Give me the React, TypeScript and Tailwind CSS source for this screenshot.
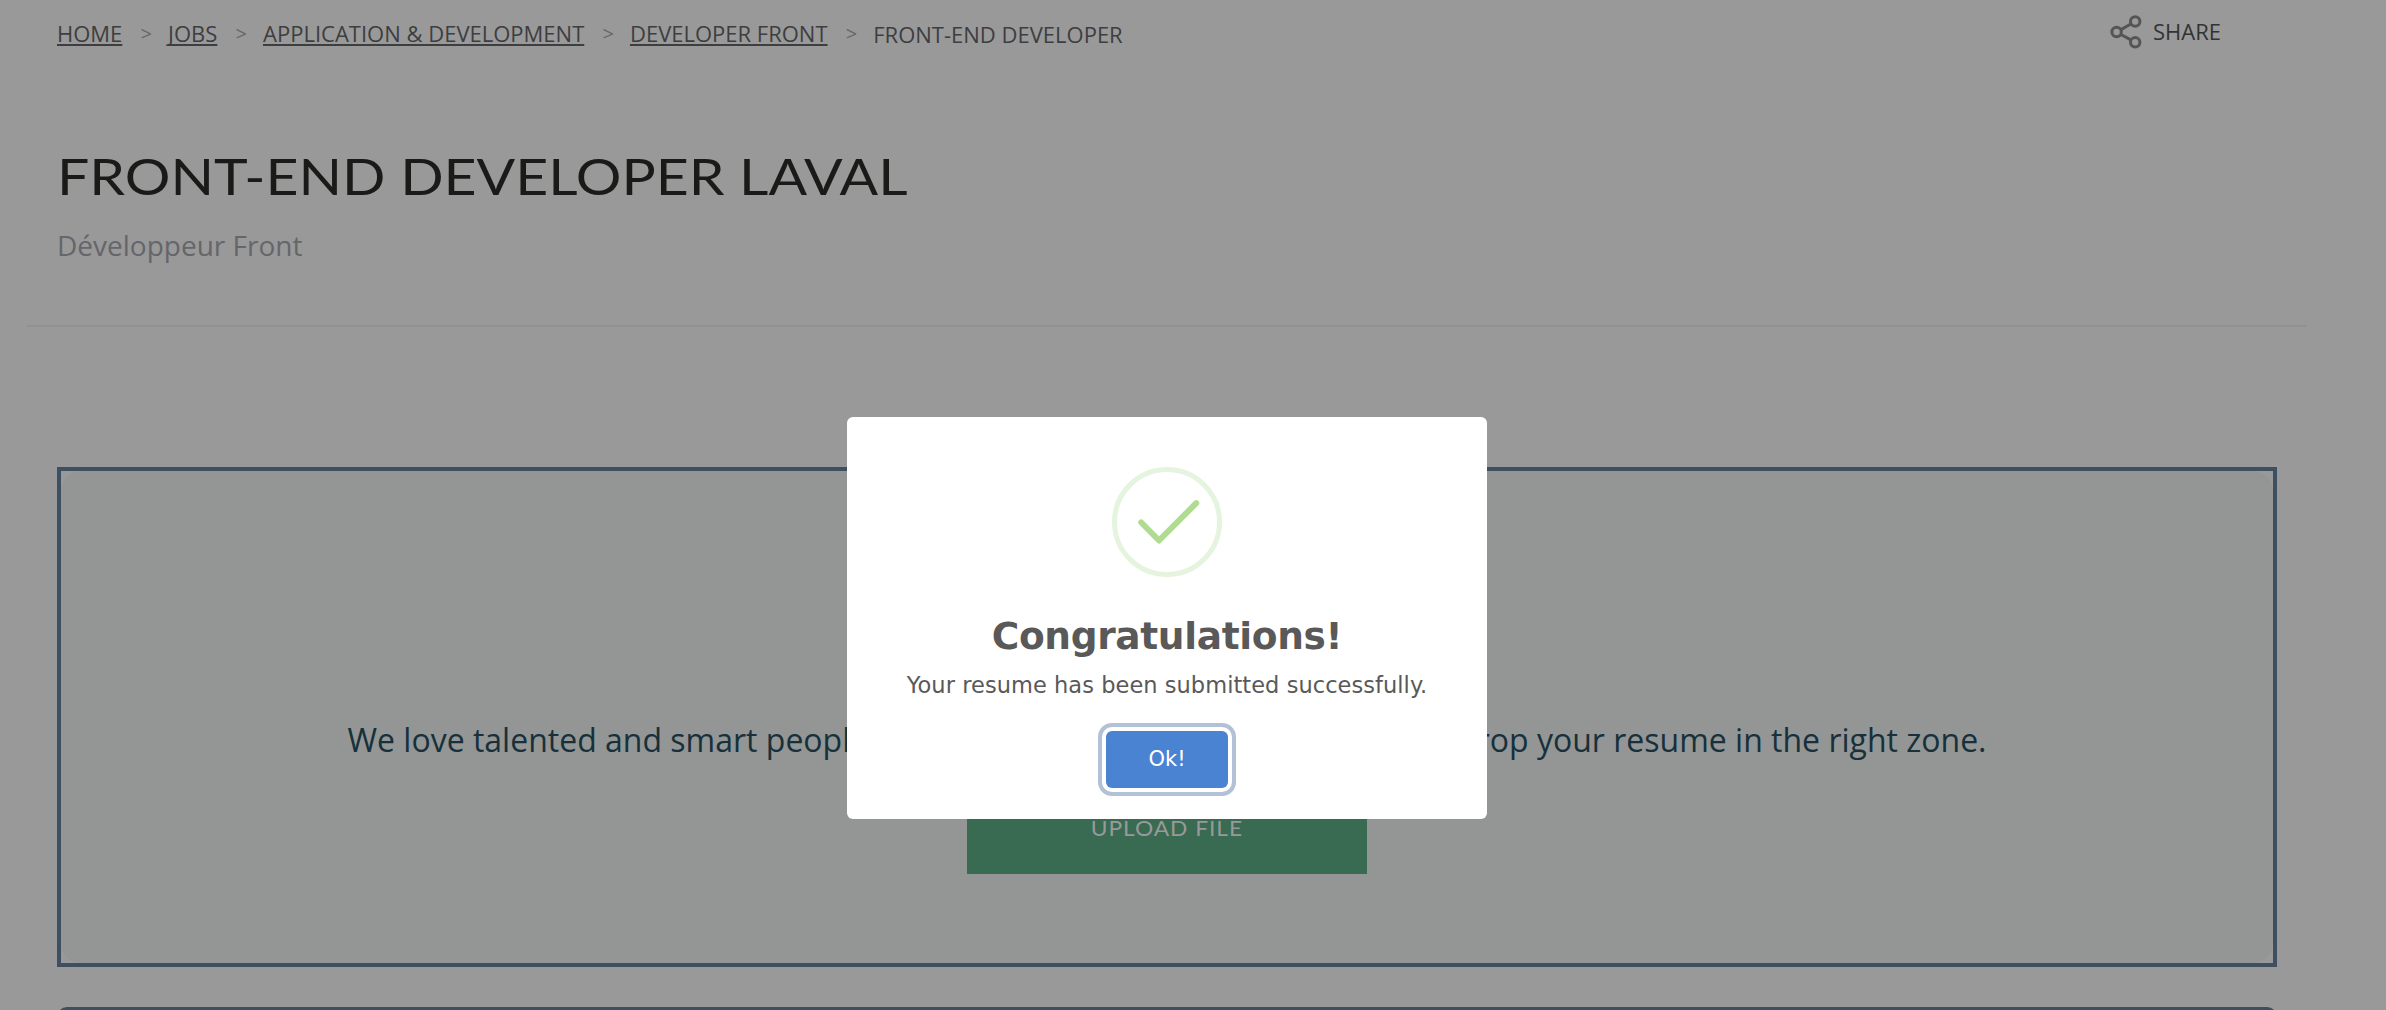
const crumbs = ['HOME', 'JOBS', 'APPLICATION & DEVELOPMENT', 'DEVELOPER FRONT'];

function ShareIcon() {
  return (
    <svg width="32" height="34" viewBox="0 0 32 34" fill="none" stroke="#555555" strokeWidth="3">
      <circle cx="25.2" cy="6.5" r="4.7" />
      <circle cx="6.6" cy="17" r="4.7" />
      <circle cx="25.2" cy="27.3" r="4.7" />
      <path d="M11 14.6 L20.8 9 M11 19.5 L20.8 24.9" />
    </svg>
  );
}

function Breadcrumbs() {
  return (
    <nav className="flex items-center text-[22px] leading-[30px] text-[#3d3e40]">
      {crumbs.map((c) => (
        <span key={c} className="flex whitespace-nowrap">
          <a className="underline decoration-2 underline-offset-[2px] [text-decoration-skip-ink:none]">{c}</a>
          <span className="w-[45.7px] pl-[2px] pt-px text-center text-[20px] text-[#65666b]">&gt;</span>
        </span>
      ))}
      <span className="whitespace-nowrap">FRONT-END DEVELOPER</span>
    </nav>
  );
}

function Modal() {
  return (
    <div className="absolute left-[847px] top-[417px] flex h-[402px] w-[640px] flex-col items-center rounded-md bg-white pt-[50px] font-['DejaVu_Sans',sans-serif] text-[#595959]">
      <svg width="110" height="110" viewBox="0 0 110 110" fill="none">
        <circle cx="55" cy="55" r="52.5" stroke="#e5f4de" strokeWidth="5" />
        <path d="M29.3 55.5 L47 73.5 L84.2 36.2" stroke="#b0dc92" strokeWidth="6" strokeLinecap="round" strokeLinejoin="round" />
      </svg>
      <h2 className="mt-[34px] whitespace-nowrap text-[37.5px] font-bold leading-[50px] tracking-[-0.35px]">Congratulations!</h2>
      <p className="mt-[8px] whitespace-nowrap text-[22.5px] leading-[32px] tracking-[0.05px]">Your resume has been submitted successfully.</p>
      <button className="mt-[30px] h-[57px] w-[122px] rounded-md bg-[#4a83d1] pt-px text-[21px] text-white outline-4 outline-offset-4 outline-[#b2c1d5]">
        Ok!
      </button>
    </div>
  );
}

export default function App() {
  return (
    <div className="relative h-[1010px] w-[2386px] overflow-hidden bg-[#999999] font-['Open_Sans',sans-serif]">
      <header className="flex h-[68px] items-start justify-between pl-[57px] pr-[165px]">
        <div className="pt-[18px]">
          <Breadcrumbs />
        </div>
        <div className="flex items-start gap-[11px] pt-[15px] text-[22px] leading-[30px] text-[#333333]">
          <ShareIcon />
          <span className="pt-px">SHARE</span>
        </div>
      </header>
      <section className="ml-[27px] mr-[79px] h-[259px] border-b-2 border-[#919191] pl-[30px] pt-[76px]">
        <h1 className="w-fit origin-left scale-x-[1.12] whitespace-nowrap font-['Lato',sans-serif] text-[51px] leading-[64px] text-[#1a1a19]">FRONT-END DEVELOPER LAVAL</h1>
        <p className="mt-[18px] text-[28px] leading-[38px] text-[#65666b]">Développeur Front</p>
      </section>
      <section className="ml-[57px] mt-[140px] h-[500px] w-[2220px] border-4 border-[#3d4f60]">
        <div className="flex h-full flex-col items-center rounded-[20px] bg-[#939694] pt-[247px]">
          <div className="flex w-[1639px] justify-between whitespace-nowrap text-[32px] leading-[44px] text-[#17303b]">
            <span>We love talented and smart people</span>
            <span>drop your resume in the right zone.</span>
          </div>
          <button className="mt-[20px] h-[92px] w-[400px] bg-[#386b51] font-['Lato',sans-serif] text-[21.5px] text-[#999999]">
            <span className="inline-block scale-x-[1.06] tracking-[0.9px]">UPLOAD FILE</span>
          </button>
        </div>
      </section>
      <section className="ml-[57px] mt-[40px] h-[100px] w-[2220px] rounded-[10px] border-4 border-[#3d4f60]" />
      <Modal />
    </div>
  );
}
